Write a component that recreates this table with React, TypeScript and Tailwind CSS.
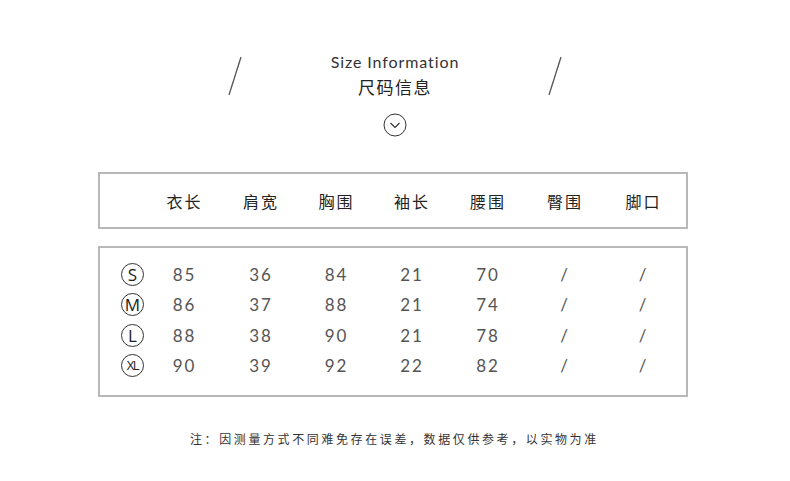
// App.tsx
import React from "react";

// 尺码表：列宽按参考图量出来的
const columns = ["衣长", "肩宽", "胸围", "袖长", "腰围", "臀围", "脚口"];

type Row = { size: string; values: string[] };

const rows: Row[] = [
  { size: "S", values: ["85", "36", "84", "21", "70", "/", "/"] },
  { size: "M", values: ["86", "37", "88", "21", "74", "/", "/"] },
  { size: "L", values: ["88", "38", "90", "21", "78", "/", "/"] },
  { size: "XL", values: ["90", "39", "92", "22", "82", "/", "/"] },
];

const gridCols = "grid grid-cols-[46px_77px_76px_75px_76px_76px_78px_79px]";
const cjk = "font-['Noto_Sans_CJK_SC','Noto_Sans',sans-serif]";

function Slash() {
  return (
    <svg width="14" height="40" viewBox="0 0 14 40" className="shrink-0">
      <line x1="1" y1="39" x2="13" y2="1" stroke="#555" strokeWidth="1.3" />
    </svg>
  );
}

function SizeBadge({ size }: { size: string }) {
  return (
    <div className="ml-[21px] flex h-[23px] w-[23px] items-center justify-center rounded-full border border-[#333]">
      <span
        className={
          size === "XL"
            ? "font-['Open_Sans',sans-serif] text-[13px] leading-none tracking-[-1.5px] text-[#222]"
            : "font-['Open_Sans',sans-serif] text-[17px] leading-none text-[#222]"
        }
      >
        {size}
      </span>
    </div>
  );
}

export default function App() {
  return (
    <div className="h-[481px] w-[790px] bg-white pt-[52px]">
      {/* 标题 */}
      <div className="flex items-center justify-center">
        <Slash />
        <div className="w-[306px] text-center">
          <div className="font-['Lato',sans-serif] text-[16px] leading-[20px] tracking-[0.9px] text-[#333]">
            Size Information
          </div>
          <div className={`${cjk} mt-[3px] text-[17px] leading-[24px] tracking-[1.5px] text-[#222]`}>
            尺码信息
          </div>
        </div>
        <Slash />
      </div>

      <div className="mt-[14px] flex justify-center">
        <svg width="24" height="24" viewBox="0 0 24 24">
          <circle cx="12" cy="12" r="11" fill="none" stroke="#333" strokeWidth="1" />
          <polyline points="7.5,10 12,14.5 16.5,10" fill="none" stroke="#333" strokeWidth="1.2" />
        </svg>
      </div>

      {/* 表头 */}
      <div className="ml-[98px] mt-[35px] h-[57px] w-[590px] border-2 border-[#b8b8b8]">
        <div className={`${gridCols} h-full items-center`}>
          <div />
          {columns.map((c) => (
            <div key={c} className={`${cjk} text-center text-[16px] tracking-[2px] text-[#222]`}>
              {c}
            </div>
          ))}
        </div>
      </div>

      {/* 数据 */}
      <div className="ml-[98px] mt-[17px] w-[590px] border-2 border-[#b8b8b8] pb-[14px] pt-[11px]">
        {rows.map((r) => (
          <div key={r.size} className={`${gridCols} h-[30.5px] items-center`}>
            <SizeBadge size={r.size} />
            {r.values.map((v, i) => (
              <div
                key={i}
                className="text-center font-['Lato',sans-serif] text-[17px] tracking-[2px] text-[#555]"
              >
                {v}
              </div>
            ))}
          </div>
        ))}
      </div>

      <p className={`${cjk} mt-[34px] ml-[190px] text-[12px] leading-[16px] tracking-[2.6px] text-[#333]`}>
        注：因测量方式不同难免存在误差，数据仅供参考，以实物为准
      </p>
    </div>
  );
}
